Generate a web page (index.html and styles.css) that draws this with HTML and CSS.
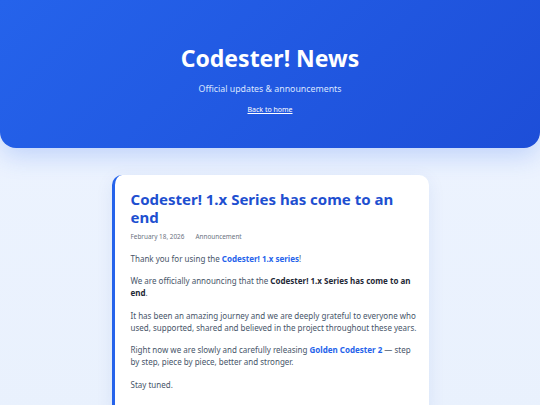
FILE: index.html
```html
<!DOCTYPE html>
<html lang="en">
<head>
<meta charset="utf-8">
<title>Codester! News</title>
<link rel="stylesheet" href="styles.css">
</head>
<body>
<header class="hero">
  <h1 class="hero-title">Codester! News</h1>
  <p class="hero-sub">Official updates &amp; announcements</p>
  <a class="hero-link" href="#">Back to home</a>
</header>
<main class="content">
  <article class="post">
    <h2 class="post-title">Codester! 1.x Series has come to an end</h2>
    <div class="post-meta">
      <span>February 18, 2026</span>
      <span>Announcement</span>
    </div>
    <div class="post-body">
      <p>Thank you for using the <a href="#" class="hl">Codester! 1.x series</a>!</p>
      <p>We are officially announcing that the <strong>Codester! 1.x Series has come to an end</strong>.</p>
      <p>It has been an amazing journey and we are deeply grateful to everyone who used, supported, shared and believed in the project throughout these years.</p>
      <p>Right now we are slowly and carefully releasing <a href="#" class="hl">Golden Codester 2</a> — step by step, piece by piece, better and stronger.</p>
      <p>Stay tuned.</p>
    </div>
  </article>
</main>
</body>
</html>
```

FILE: styles.css
```css
* { box-sizing: border-box; }
html, body { margin: 0; padding: 0; }
body {
  font-family: "Noto Sans", "Open Sans", sans-serif;
  background: linear-gradient(180deg, #eef4ff 0%, #e9f1fd 100%);
  min-height: 405px;
  color: #475569;
}
.hero {
  background: linear-gradient(135deg, #2563eb 0%, #1d4ed8 100%);
  color: #fff;
  text-align: center;
  padding: 45px 16px 31px;
  border-radius: 0 0 16px 16px;
  box-shadow: 0 8px 24px rgba(37, 99, 235, 0.22);
}
.hero-title {
  margin: 0;
  font-size: 23px;
  line-height: 1.2;
  font-weight: 700;
}
.hero-sub {
  margin: 10px 0 0;
  font-size: 8.8px;
  line-height: 1.4;
  color: #dbe6ff;
}
.hero-link {
  display: inline-block;
  margin-top: 1px;
  font-size: 7px;
  color: #fff;
  text-decoration: underline;
}
.content {
  display: flex;
  justify-content: center;
  padding: 27px 0 0;
}
.post {
  width: 317px;
  background: #fff;
  border-left: 3px solid #2563eb;
  border-radius: 10px;
  padding: 15px 10px 16px 16px;
  box-shadow: 0 4px 18px rgba(30, 64, 175, 0.08);
}
.post-title {
  margin: 0;
  font-size: 15px;
  line-height: 1.2;
  font-weight: 700;
  color: #1e4fd0;
}
.post-meta {
  display: flex;
  gap: 11px;
  margin-top: 6px;
  font-size: 6.4px;
  color: #6b7280;
}
.post-body {
  margin-top: 12px;
  font-size: 8px;
  line-height: 1.5;
}
.post-body p { margin: 0 0 10.5px; }
.post-body strong { color: #1f2937; font-weight: 700; }
.hl { color: #2563eb; font-weight: 700; text-decoration: none; }
```
